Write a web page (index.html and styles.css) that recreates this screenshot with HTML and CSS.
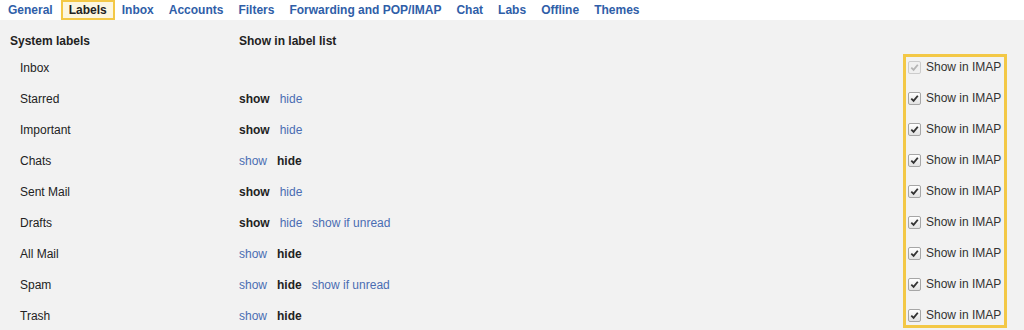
FILE: index.html
```html
<!DOCTYPE html>
<html>

<head>
    <meta charset="utf-8">
    <link rel="stylesheet" href="styles.css">
</head>

<body>
    <div class="tabs">
        <a class="tab">General</a>
        <a class="tab active">Labels</a>
        <a class="tab">Inbox</a>
        <a class="tab">Accounts</a>
        <a class="tab">Filters</a>
        <a class="tab">Forwarding and POP/IMAP</a>
        <a class="tab">Chat</a>
        <a class="tab">Labs</a>
        <a class="tab">Offline</a>
        <a class="tab">Themes</a>
    </div>

    <div class="settings">
        <div class="labels-table">
            <div class="label-rows">
                <div class="row head">
                    <span class="col-name">System labels</span>
                    <span class="col-show">Show in label list</span>
                </div>
                <div class="row">
                    <span class="col-name">Inbox</span>
                    <span class="col-show"></span>
                </div>
                <div class="row">
                    <span class="col-name">Starred</span>
                    <span class="col-show"><b>show</b><a>hide</a></span>
                </div>
                <div class="row">
                    <span class="col-name">Important</span>
                    <span class="col-show"><b>show</b><a>hide</a></span>
                </div>
                <div class="row">
                    <span class="col-name">Chats</span>
                    <span class="col-show"><a>show</a><b>hide</b></span>
                </div>
                <div class="row">
                    <span class="col-name">Sent Mail</span>
                    <span class="col-show"><b>show</b><a>hide</a></span>
                </div>
                <div class="row">
                    <span class="col-name">Drafts</span>
                    <span class="col-show"><b>show</b><a>hide</a><a>show if unread</a></span>
                </div>
                <div class="row">
                    <span class="col-name">All Mail</span>
                    <span class="col-show"><a>show</a><b>hide</b></span>
                </div>
                <div class="row">
                    <span class="col-name">Spam</span>
                    <span class="col-show"><a>show</a><b>hide</b><a>show if unread</a></span>
                </div>
                <div class="row">
                    <span class="col-name">Trash</span>
                    <span class="col-show"><a>show</a><b>hide</b></span>
                </div>
            </div>

            <div class="imap-col">
                <label class="imap-item">
                    <span class="check disabled"><svg viewBox="0 0 12 12"><path d="M2.5 6.2 L5 8.6 L9.6 3" /></svg></span>
                    <span>Show in IMAP</span>
                </label>
                <label class="imap-item">
                    <span class="check"><svg viewBox="0 0 12 12"><path d="M2.5 6.2 L5 8.6 L9.6 3" /></svg></span>
                    <span>Show in IMAP</span>
                </label>
                <label class="imap-item">
                    <span class="check"><svg viewBox="0 0 12 12"><path d="M2.5 6.2 L5 8.6 L9.6 3" /></svg></span>
                    <span>Show in IMAP</span>
                </label>
                <label class="imap-item">
                    <span class="check"><svg viewBox="0 0 12 12"><path d="M2.5 6.2 L5 8.6 L9.6 3" /></svg></span>
                    <span>Show in IMAP</span>
                </label>
                <label class="imap-item">
                    <span class="check"><svg viewBox="0 0 12 12"><path d="M2.5 6.2 L5 8.6 L9.6 3" /></svg></span>
                    <span>Show in IMAP</span>
                </label>
                <label class="imap-item">
                    <span class="check"><svg viewBox="0 0 12 12"><path d="M2.5 6.2 L5 8.6 L9.6 3" /></svg></span>
                    <span>Show in IMAP</span>
                </label>
                <label class="imap-item">
                    <span class="check"><svg viewBox="0 0 12 12"><path d="M2.5 6.2 L5 8.6 L9.6 3" /></svg></span>
                    <span>Show in IMAP</span>
                </label>
                <label class="imap-item">
                    <span class="check"><svg viewBox="0 0 12 12"><path d="M2.5 6.2 L5 8.6 L9.6 3" /></svg></span>
                    <span>Show in IMAP</span>
                </label>
                <label class="imap-item">
                    <span class="check"><svg viewBox="0 0 12 12"><path d="M2.5 6.2 L5 8.6 L9.6 3" /></svg></span>
                    <span>Show in IMAP</span>
                </label>
            </div>
        </div>
    </div>
</body>

</html>
```

FILE: styles.css
```css
* {
    margin: 0;
    padding: 0;
    box-sizing: border-box;
}

body {
    width: 1024px;
    height: 330px;
    overflow: hidden;
    font-family: "Liberation Sans", Arial, sans-serif;
    font-size: 12px;
    color: #222222;
    background: #f2f2f2;
}

/* Tab bar */
.tabs {
    display: flex;
    align-items: center;
    height: 20px;
    padding-left: 1px;
    background: #ffffff;
}

.tab {
    padding: 0 7px;
    margin-right: 1px;
    font-weight: bold;
    color: #2f5ea8;
    line-height: 20px;
    cursor: pointer;
}

.tab.active {
    padding: 0 6px;
    margin: 0;
    height: 20px;
    line-height: 16px;
    color: #222222;
    background: #fcf6e0;
    border: 2px solid #f3c846;
}

/* Labels table */
.settings {
    padding-top: 10px;
}

.labels-table {
    display: flex;
    padding-right: 17px;
}

.label-rows {
    flex: 1;
}

.row {
    display: flex;
    align-items: center;
    height: 31px;
}

.row.head {
    height: 22px;
    font-weight: bold;
}

.row.head .col-name {
    padding-left: 10px;
}

.col-name {
    width: 239px;
    padding-left: 20px;
}

.col-show {
    display: flex;
    gap: 10px;
}

.col-show b {
    color: #222222;
}

.col-show a {
    color: #4a6db3;
    cursor: pointer;
}

/* IMAP column with highlight */
.imap-col {
    align-self: flex-start;
    display: flex;
    flex-direction: column;
    gap: 11px;
    width: 104px;
    margin-top: 24px;
    padding-left: 2px;
    border: 3px solid #f3c846;
}

.imap-item {
    display: flex;
    align-items: center;
    gap: 5px;
    height: 20px;
    color: #333333;
}

.check {
    display: flex;
    align-items: center;
    justify-content: center;
    width: 13px;
    height: 13px;
    border: 1px solid #a6a6a6;
    border-radius: 2px;
    background: linear-gradient(#ffffff, #e2e2e2);
}

.check svg {
    width: 11px;
    height: 11px;
    fill: none;
    stroke: #333333;
    stroke-width: 2;
}

.check.disabled {
    border-color: #cccccc;
    background: #f0f0f0;
}

.check.disabled svg {
    stroke: #b5b5b5;
}
```
